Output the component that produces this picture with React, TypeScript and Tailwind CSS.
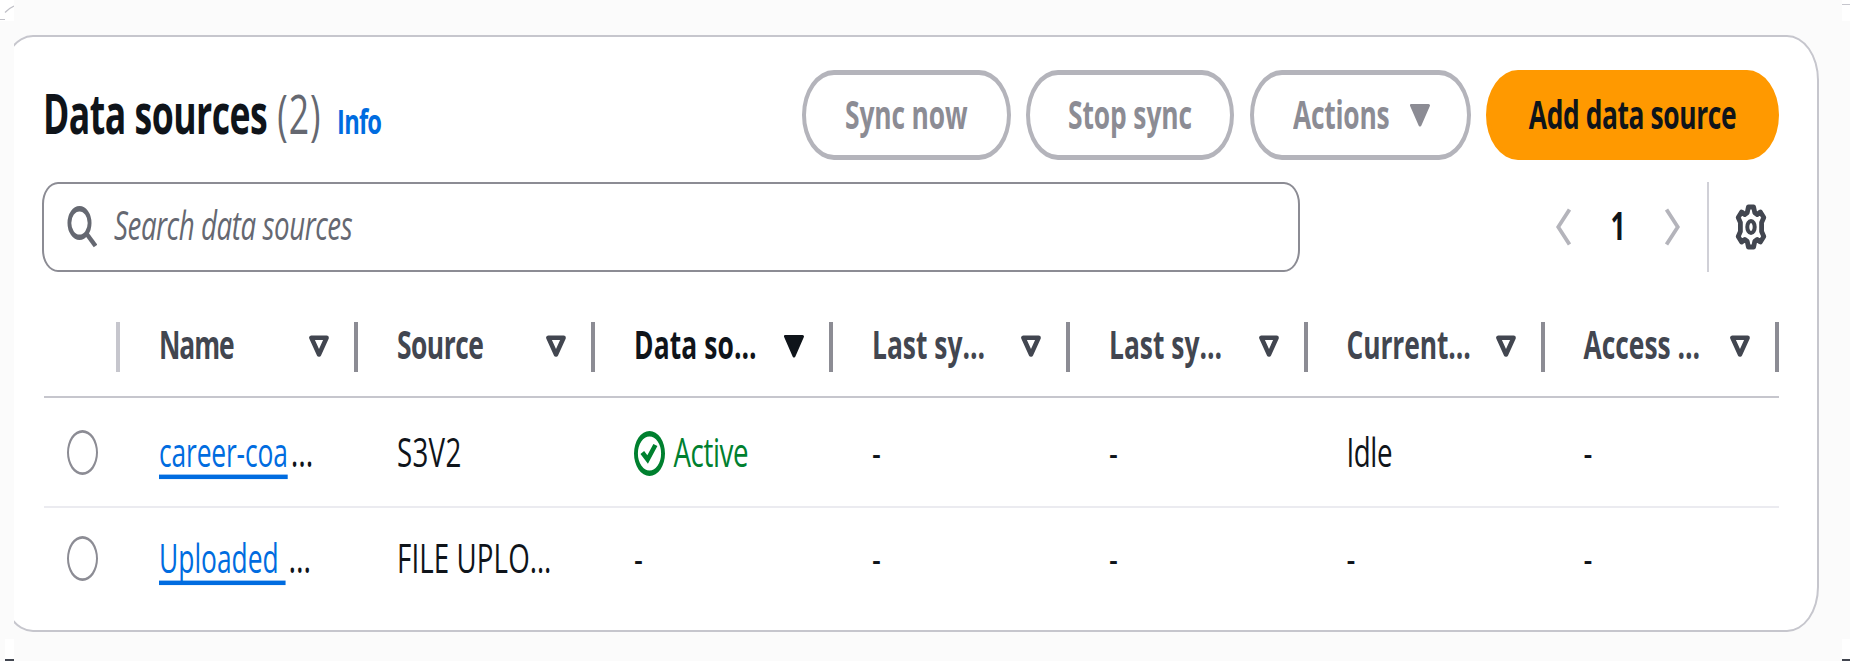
import React from "react";

type TextProps = { className?: string; children: React.ReactNode };

/** Regular text set in the console's tall, condensed proportions. */
function T({ className = "", children }: TextProps) {
  return (
    <span className={"inline-block origin-center scale-y-[1.42] whitespace-pre leading-[40px] " + className}>
      {children}
    </span>
  );
}

/** Bold text, slightly narrower than the regular cut. */
function B({ className = "", children }: TextProps) {
  return (
    <span
      className={
        "inline-block origin-center scale-y-[1.49] whitespace-pre text-[26.4px] leading-[40px] font-bold " + className
      }
    >
      {children}
    </span>
  );
}

function Triangle({ filled = false, className = "" }: { filled?: boolean; className?: string }) {
  return (
    <svg viewBox="0 0 20 23" preserveAspectRatio="none" className={"h-[23px] w-5 shrink-0 " + className}>
      <path
        d={filled ? "M1.5 1.5H18.5L10 21Z" : "M2.4 2.8H17.6L10 19.5Z"}
        fill={filled ? "currentColor" : "none"}
        stroke="currentColor"
        strokeWidth={filled ? 3 : 4.5}
        strokeLinejoin="round"
      />
    </svg>
  );
}

function Button({ className = "", children }: TextProps) {
  return (
    <button
      className={
        "flex h-[90px] shrink-0 items-center rounded-[32px/45px] border-x-4 border-y-[5.6px] pb-[3px] " + className
      }
    >
      {children}
    </button>
  );
}

function Radio() {
  return (
    <svg viewBox="0 0 31 45" className="h-[45px] w-[31px]" fill="none">
      <path
        fill="#8c8c94"
        fillRule="evenodd"
        d="M15.5 0A15.5 22.5 0 0 1 15.5 45A15.5 22.5 0 0 1 15.5 0ZM15.5 2.8A13.5 19.7 0 0 0 15.5 42.2A13.5 19.7 0 0 0 15.5 2.8Z"
      />
    </svg>
  );
}

const columns = [
  { label: "Name", tracking: "tracking-[-1.1px]" },
  { label: "Source", tracking: "tracking-[-0.5px]" },
  { label: "Data so…", tracking: "tracking-[0.1px]", active: true },
  { label: "Last sy…", tracking: "" },
  { label: "Last sy…", tracking: "" },
  { label: "Current…", tracking: "tracking-[-0.1px]" },
  { label: "Access …", tracking: "" },
];

function Link({ children, className = "" }: { children: string; className?: string }) {
  return (
    <span className="inline-block origin-center scale-y-[1.49] text-[26.4px] leading-[40px] whitespace-pre">
      <a
        className={
          "text-[#006ce0] underline decoration-[3px] underline-offset-[5px] [text-decoration-skip-ink:none] " +
          className
        }
      >
        {children}
      </a>
      <span className="ml-[3px] text-[29px]">…</span>
    </span>
  );
}

function Active() {
  return (
    <span className="flex items-center text-[#00802f]">
      <svg viewBox="0 0 31 45" className="mt-[4px] mr-[8.5px] h-[45px] w-[31px]" fill="none">
        <path
          fill="currentColor"
          fillRule="evenodd"
          d="M15.5 0A15.5 22.5 0 0 1 15.5 45A15.5 22.5 0 0 1 15.5 0ZM15.5 5.6A11.6 16.9 0 0 0 15.5 39.4A11.6 16.9 0 0 0 15.5 5.6Z"
        />
        <path d="M8.3 21.5L13.6 28.5L21.4 14" stroke="currentColor" strokeWidth="4.6" />
      </svg>
      <T className="tracking-[-0.4px]">Active</T>
    </span>
  );
}

const rows: React.ReactNode[][] = [
  [
    <Link className="tracking-[-0.15px]">career-coa</Link>,
    <T className="tracking-[0.3px]">S3V2</T>,
    <Active />,
    <T>-</T>,
    <T>-</T>,
    <T className="tracking-[-0.4px]">Idle</T>,
    <T>-</T>,
  ],
  [
    <Link>{"Uploaded "}</Link>,
    <T className="tracking-[0.1px]">FILE UPLO…</T>,
    <T>-</T>,
    <T>-</T>,
    <T>-</T>,
    <T>-</T>,
    <T>-</T>,
  ],
];

const grid = "grid grid-cols-[76px_238px_237px_238px_237px_237.5px_237px_234.5px]";

export default function App() {
  return (
    <div
      className="flex h-[661px] w-[1850px] overflow-hidden bg-[#fbfbfb] text-[27.7px] text-[#0f141a]"
      style={{ fontFamily: '"Open Sans", "Noto Sans", sans-serif' }}
    >
      <div className="flex w-[14px] shrink-0 flex-col justify-between">
        <svg viewBox="0 0 14 21" className="h-[21px] w-[14px]" fill="none">
          <path d="M0 0H14V21H0Z" fill="#fff" />
          <path d="M0 19.5H5M5 12.5Q9 8 14 6" stroke="#c0c0c7" strokeWidth="1.2" />
        </svg>
        <div className="ml-[5px] h-[22px] border-b-2 border-[#424650] bg-white" />
      </div>

      <main className="flex w-[1828px] shrink-0 overflow-hidden">
        <section className="-ml-[13px] mt-[35px] h-[597px] w-[1818px] shrink-0 rounded-[32px/45px] border-2 border-[#c6c6cd] bg-white pl-[41px] pr-[38px] pt-[33px]">
          <header className="flex h-[90px] items-center">
            <h2 className="-ml-px flex items-baseline pt-[15px]">
              <span className="origin-[0_34px] scale-y-[1.55] text-[35.6px] leading-[40px] font-bold tracking-[-0.5px]">
                Data sources
              </span>
              <span className="ml-[10px] origin-[0_34px] scale-y-[1.55] text-[35.6px] leading-[40px] tracking-[1px] text-[#656871]">
                (2)
              </span>
              <span className="ml-[15.5px] origin-[0_29px] scale-y-[1.42] text-[23.7px] leading-[40px] font-bold tracking-[-0.8px] text-[#006ce0]">
                Info
              </span>
            </h2>
            <div className="ml-auto flex gap-[15.5px]">
              <Button className="w-[208.5px] justify-center border-[#b4b4bb] text-[#8c8c94]">
                <B className="tracking-[-0.15px]">Sync now</B>
              </Button>
              <Button className="w-[208px] justify-center border-[#b4b4bb] text-[#8c8c94]">
                <B className="tracking-[-0.1px]">Stop sync</B>
              </Button>
              <Button className="w-[221px] border-[#b4b4bb] pr-[36.5px] pl-[39.5px] text-[#8c8c94]">
                <B className="tracking-[-0.25px]">Actions</B>
                <Triangle filled className="mt-[4px] ml-auto" />
              </Button>
              <Button className="w-[293px] justify-center border-[#ff9900] bg-[#ff9900]">
                <B className="tracking-[-0.4px]">Add data source</B>
              </Button>
            </div>
          </header>

          <div className="mt-[22px] flex h-[90px] items-center">
            <div className="-ml-[2px] flex h-[90px] w-[1258px] items-center rounded-[16px/22px] border-x-2 border-y-[2.8px] border-[#8c8c94] pb-[6px] pl-[23px]">
              <svg viewBox="0 0 30 42" className="mt-[6px] h-[42px] w-[30px] text-[#656871]" fill="none">
                <path
                  fill="currentColor"
                  fillRule="evenodd"
                  d="M12.5 0A12 17 0 0 1 12.5 34A12 17 0 0 1 12.5 0ZM12.5 5.5A8.2 11.5 0 0 0 12.5 28.5A8.2 11.5 0 0 0 12.5 5.5Z"
                />
                <path d="M19 27L28.5 40" stroke="currentColor" strokeWidth="4.4" />
              </svg>
              <T className="ml-[17px] tracking-[-0.43px] text-[#656871] italic">Search data sources</T>
            </div>
            <div className="ml-auto flex h-[90px] items-center">
              <svg viewBox="0 0 15 38" className="h-[38px] w-[15px]" fill="none">
                <path d="M13.5 1.5L2.2 19L13.5 36.5" stroke="#b4b4bb" strokeWidth="3.8" />
              </svg>
              <B className="mb-[4px] ml-[39.5px] w-[16px]">1</B>
              <svg viewBox="0 0 15 38" className="ml-[38.5px] h-[38px] w-[15px]" fill="none">
                <path d="M1.5 1.5L12.8 19L1.5 36.5" stroke="#b4b4bb" strokeWidth="3.8" />
              </svg>
              <div className="ml-[27px] h-full w-[2px] bg-[#d0d0d7]" />
              <svg
                viewBox="-16 -23 32 46"
                className="mr-[12px] ml-[26px] h-[46px] w-[32px] text-[#424650]"
                fill="none"
                stroke="currentColor"
                strokeWidth="4.8"
                strokeLinejoin="round"
              >
                <path d="M-2.6 -20H2.6L3.8 -14.2L6.2 -12.5L9.4 -15L12.8 -9.5L10.6 -4.5V4.5L12.8 9.5L9.4 15L6.2 12.5L3.8 14.2L2.6 20H-2.6L-3.8 14.2L-6.2 12.5L-9.4 15L-12.8 9.5L-10.6 4.5V-4.5L-12.8 -9.5L-9.4 -15L-6.2 -12.5L-3.8 -14.2Z" />
                <ellipse rx="3.7" ry="6" strokeWidth="4" />
              </svg>
            </div>
          </div>

          <div className="mt-[33px] w-[1735px]">
            <div className={grid + " h-[93px] border-b-[2.5px] border-[#c6c6cd]"}>
              <div className="mt-[17px] h-[50px] w-[4px] justify-self-end bg-[#c6c6cd]" />
              {columns.map((c, i) => (
                <div
                  key={i}
                  className={
                    "mt-[17px] flex h-[50px] items-center border-r-4 border-[#8c8c94] pr-[25px] pl-[39px] " +
                    (c.active ? "text-[#0f141a]" : "text-[#424650]")
                  }
                >
                  <B className={"mb-[7px] " + c.tracking}>{c.label}</B>
                  <Triangle filled={c.active} className="mb-[2px] ml-auto" />
                </div>
              ))}
            </div>
            {rows.map((cells, r) => (
              <div
                key={r}
                className={grid + (r === 0 ? " h-[110px] border-b-2 border-[#ebebf0]" : " h-[100px]")}
              >
                <div className="flex items-center pl-[23px]">
                  <Radio />
                </div>
                {cells.map((cell, i) => (
                  <div key={i} className="flex items-center pb-[2px] pl-[39px]">
                    {cell}
                  </div>
                ))}
              </div>
            ))}
          </div>
        </section>
      </main>

      <div className="flex w-[8px] shrink-0 flex-col justify-between">
        <div className="h-[21px] bg-white pt-[4px]">
          <div className="h-px bg-[#c6c6cd]" />
        </div>
        <div className="h-[22px] border-b-2 border-[#424650] bg-white" />
      </div>
    </div>
  );
}
